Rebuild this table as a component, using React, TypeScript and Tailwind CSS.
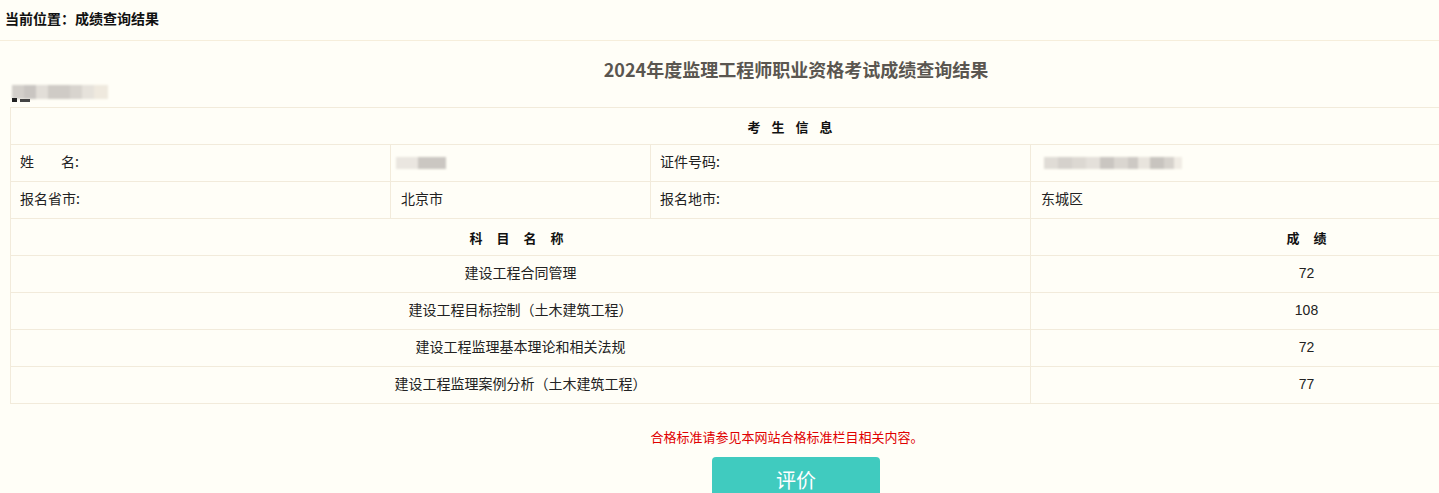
import React from "react";

const cjk = { fontFamily: '"Noto Sans CJK SC", "Liberation Sans", sans-serif' };
const num = { fontFamily: '"Liberation Sans", "Noto Sans CJK SC", sans-serif' };

const subjects = [
  { name: "建设工程合同管理", score: "72" },
  { name: "建设工程目标控制（土木建筑工程）", score: "108" },
  { name: "建设工程监理基本理论和相关法规", score: "72" },
  { name: "建设工程监理案例分析（土木建筑工程）", score: "77" },
];

const Blur = ({ shades, h = "h-[12px]" }: { shades: [string, number][]; h?: string }) => (
  <div className={`flex ${h} blur-[1px]`}>
    {shades.map(([c, w], i) => (
      <div key={i} style={{ background: c, width: w }} />
    ))}
  </div>
);

const Spaced = ({ chars, gap, extra }: { chars: string; gap: string; extra: string }) => (
  <div className={`flex h-[37px] items-center justify-center border-b border-r border-[#f2ebdb] text-[13px] font-bold text-[#111] ${extra}`}>
    <div className={`flex ${gap}`}>
      {chars.split("").map((c) => (
        <span key={c}>{c}</span>
      ))}
    </div>
  </div>
);

export default function App() {
  return (
    <div className="min-h-screen w-[1592px] bg-[#fffef7] text-[#222]" style={cjk}>
      <div className="h-[41px] border-b border-[#f6eedb] pl-[5px] pt-[10px] text-[14px] font-bold leading-[16px] text-[#111]">
        当前位置：成绩查询结果
      </div>

      <div className="pt-[16px] text-center text-[18px] font-bold leading-[24px] text-[#5a5650]">
        2024年度监理工程师职业资格考试成绩查询结果
      </div>
      <div className="relative h-[26px] pl-[12px] pt-[4px]">
        <Blur
          h="h-[14px]"
          shades={[
            ["#d3cfca", 12],
            ["#c9c5c1", 12],
            ["#e2ded8", 12],
            ["#cfcbc6", 22],
            ["#d8d4ce", 12],
            ["#e6e2db", 12],
            ["#efe9de", 14],
          ]}
        />
        <div className="absolute left-[12px] top-[17px] h-[4px] w-[5px] bg-[#222]" />
        <div className="absolute left-[20px] top-[18px] h-[3px] w-[10px] bg-[#444]" />
      </div>

      <div className="ml-[10px] w-[1573px] border-l border-t border-[#f2ebdb] text-[14px] leading-[33px]">
        <Spaced chars="考生信息" gap="gap-[11px]" extra="pr-[13px]" />
        <div className="grid grid-cols-[380px_260px_380px_552px]">
          <div className="h-[37px] border-b border-r border-[#f2ebdb] pl-[9px]">
            姓<span className="inline-block w-[27px]" />名:
          </div>
          <div className="flex h-[37px] items-center border-b border-r border-[#f2ebdb] pl-[5px]">
            <Blur shades={[["#eae6e0", 22], ["#cbc7c2", 28]]} />
          </div>
          <div className="h-[37px] border-b border-r border-[#f2ebdb] pl-[9px]">证件号码:</div>
          <div className="flex h-[37px] items-center border-b border-r border-[#f2ebdb] pl-[13px]">
            <Blur
              shades={[
                ["#e0dcd6", 14],
                ["#d5d1cc", 14],
                ["#dcd8d2", 14],
                ["#e4e0da", 14],
                ["#cac6c1", 14],
                ["#dad6d0", 14],
                ["#cdc9c4", 10],
                ["#e8e4dd", 12],
                ["#c8c4bf", 14],
                ["#d6d2cc", 10],
                ["#f0ece4", 8],
              ]}
            />
          </div>
          <div className="h-[37px] border-b border-r border-[#f2ebdb] pl-[9px]">报名省市:</div>
          <div className="h-[37px] border-b border-r border-[#f2ebdb] pl-[10px]">北京市</div>
          <div className="h-[37px] border-b border-r border-[#f2ebdb] pl-[9px]">报名地市:</div>
          <div className="h-[37px] border-b border-r border-[#f2ebdb] pl-[10px]">东城区</div>
        </div>
        <div className="grid grid-cols-[1020px_552px]">
          <Spaced chars="科目名称" gap="gap-[14px]" extra="pr-[8px]" />
          <Spaced chars="成绩" gap="gap-[14px]" extra="" />
          {subjects.map((s) => (
            <React.Fragment key={s.name}>
              <div className="h-[37px] border-b border-r border-[#f2ebdb] text-center">{s.name}</div>
              <div className="h-[37px] border-b border-r border-[#f2ebdb] text-center leading-[35px]" style={num}>
                {s.score}
              </div>
            </React.Fragment>
          ))}
        </div>
      </div>

      <div className="pt-[24px] text-center text-[13px] leading-[18px] text-[#e00000]">
        <span className="pr-[18px]">合格标准请参见本网站合格标准栏目相关内容。</span>
      </div>
      <div className="flex justify-center pt-[11px]">
        <button className="h-[46px] w-[168px] rounded-[4px] bg-[#40cbbf] text-[20px] leading-[46px] text-white">
          评价
        </button>
      </div>
    </div>
  );
}
